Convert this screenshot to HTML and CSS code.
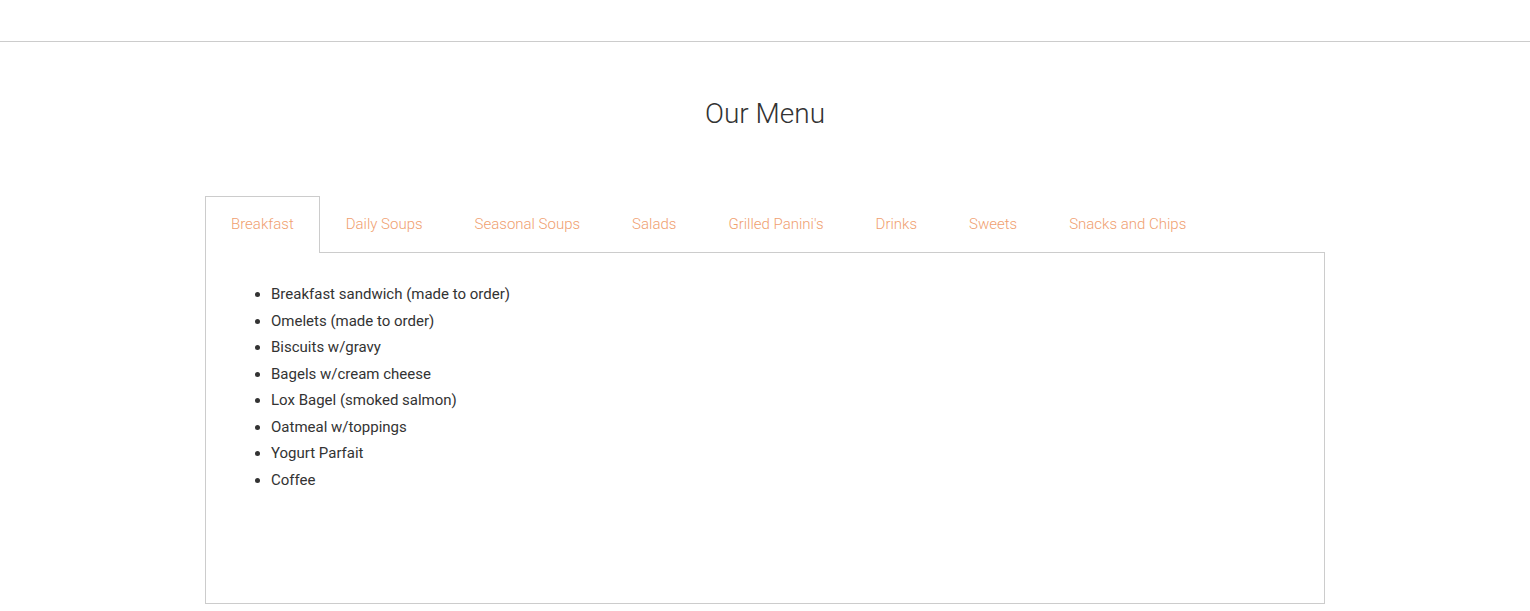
FILE: index.html
```html
<!DOCTYPE html>
<html lang="en">
<head>
<meta charset="UTF-8">
<meta name="viewport" content="width=device-width, initial-scale=1.0">
<title>Our Menu</title>
<link rel="stylesheet" href="styles.css">
</head>
<body>
    <div class="topbar"></div>
    <div class="container">
        <h1 class="title">Our Menu</h1>
        <ul class="tabs">
            <li class="tab active">Breakfast</li>
            <li class="tab">Daily Soups</li>
            <li class="tab">Seasonal Soups</li>
            <li class="tab">Salads</li>
            <li class="tab">Grilled Panini's</li>
            <li class="tab">Drinks</li>
            <li class="tab">Sweets</li>
            <li class="tab">Snacks and Chips</li>
        </ul>
        <div class="panel">
            <ul class="items">
                <li>Breakfast sandwich (made to order)</li>
                <li>Omelets (made to order)</li>
                <li>Biscuits w/gravy</li>
                <li>Bagels w/cream cheese</li>
                <li>Lox Bagel (smoked salmon)</li>
                <li>Oatmeal w/toppings</li>
                <li>Yogurt Parfait</li>
                <li>Coffee</li>
            </ul>
        </div>
    </div>
</body>
</html>
```

FILE: styles.css
```css
body {
    margin: 0;
    padding: 0;
    font-family: Roboto, 'Liberation Sans', sans-serif;
    color: #333;
    background-color: #fff;
}
.topbar {
    height: 41px;
    border-bottom: 1px solid #cccccc;
}
.container {
    width: 1120px;
    margin: 0 auto;
}
.title {
    margin: 0;
    padding: 52px 0 0;
    height: 102px;
    box-sizing: border-box;
    text-align: center;
    font-size: 28px;
    font-weight: 300;
    line-height: 40px;
    color: #333;
}
.tabs {
    display: flex;
    list-style: none;
    margin: 52px 0 0;
    padding: 0;
    position: relative;
    z-index: 1;
}
.tab {
    padding: 0 25px;
    height: 55px;
    line-height: 55px;
    font-size: 15px;
    font-weight: 300;
    color: #f0a070;
    border: 1px solid transparent;
    border-bottom: none;
    cursor: pointer;
}
.tab.active {
    border-color: #cccccc;
    background-color: #fff;
    height: 56px;
}
.panel {
    height: 352px;
    box-sizing: border-box;
    border: 1px solid #cccccc;
    margin-top: -1px;
    padding: 28px 25px;
}
.items {
    margin: 0;
    padding-left: 40px;
    font-size: 15px;
    line-height: 26.5px;
}
```
